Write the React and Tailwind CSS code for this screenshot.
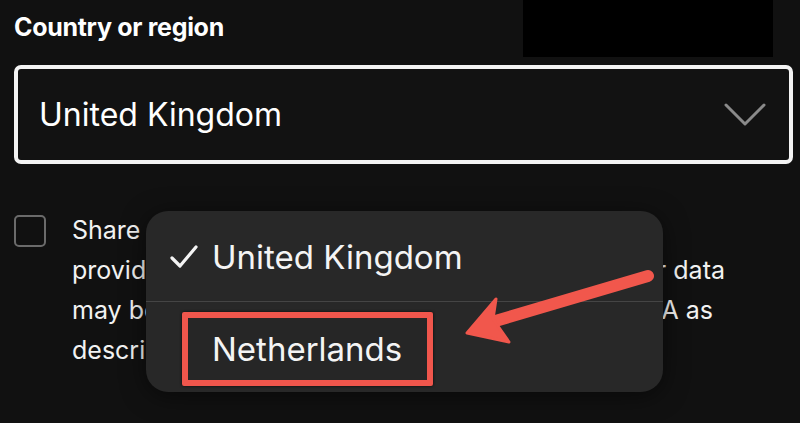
import React from 'react';

const font = { fontFamily: 'Inter, "Open Sans", Arial, sans-serif' };

const lines = [
  { left: "Share my registration data with Spotify's content", right: '', w: 'w-[653px]' },
  { left: 'providers for marketing purposes. Note that', right: 'your data', w: 'w-[653px]' },
  { left: 'may be transferred to a country outside the', right: 'EEA as', w: 'w-[641px]' },
  { left: 'described in our privacy policy.', right: '', w: 'w-[641px]' },
];

function Chevron() {
  return (
    <svg width="42" height="26" viewBox="0 0 42 26" fill="none">
      <path d="M2 3 L21 22 L40 3" stroke="#8a8a8a" strokeWidth="3" strokeLinecap="round" strokeLinejoin="round" />
    </svg>
  );
}

function Arrow() {
  return (
    <svg className="absolute left-0 top-0 pointer-events-none" width="800" height="423" viewBox="0 0 800 423">
      <path d="M648 276 L492 322" stroke="#f1574c" strokeWidth="12" strokeLinecap="round" />
      <path d="M467 333 L496 299 L493 319 L509 342 Z" fill="#f1574c" stroke="#f1574c" strokeWidth="3" strokeLinejoin="round" />
    </svg>
  );
}

export default function App() {
  return (
    <div className="relative w-[800px] h-[423px] overflow-hidden bg-[#111111] text-white" style={font}>
      <div className="flex items-start h-[65px]">
        <h1 className="pl-[14px] pt-[11px] text-[25px] font-bold leading-[32px] tracking-[-0.3px]">Country or region</h1>
        <div className="ml-auto mr-[27px] h-[57px] w-[250px] bg-black" />
      </div>

      <div className="ml-[14px] w-[779px] flex h-[99px] items-center justify-between rounded-[7px] border-[4px] border-[#f4f4f4] bg-[#121212] pl-[21px] pr-[23px]">
        <span className="text-[32px] leading-none">United Kingdom</span>
        <Chevron />
      </div>

      <div className="mt-[50px] flex gap-[26px] pl-[14px]">
        <div className="mt-[1px] h-[32px] w-[32px] shrink-0 rounded-[5px] border-2 border-[#6b6b6b]" />
        <div className="-mt-[4px] text-[25px] leading-[40px] text-[#f2f2f2]">
          {lines.map((l) => (
            <div key={l.left} className={`flex justify-between whitespace-nowrap ${l.w}`}>
              <span>{l.left}</span>
              <span>{l.right}</span>
            </div>
          ))}
        </div>
      </div>

      <div className="absolute left-[146px] top-[211px] w-[517px] h-[181px] overflow-hidden rounded-[22px] bg-[#282828] shadow-[0_4px_24px_rgba(0,0,0,0.5)]">
        <div className="flex h-[90px] items-center gap-[14px] pl-[24px] pt-[2px]">
          <svg width="28" height="24" viewBox="0 0 28 24" fill="none">
            <path d="M2 13 L10 21 L26 2" stroke="#f4f4f4" strokeWidth="3.2" strokeLinecap="round" strokeLinejoin="round" />
          </svg>
          <span className="text-[33px] leading-none text-[#f4f4f4]">United Kingdom</span>
        </div>
        <div className="h-px bg-[#454545]" />
        <div className="pl-[36px] pt-[10px]">
          <div className="flex h-[74px] w-[251px] items-center rounded-[2px] border-[6px] border-[#f0564c] bg-[#262626] pl-[24px] shadow-[0_0_3px_rgba(0,0,0,0.8)]">
            <span className="text-[33px] leading-none text-[#f4f4f4]">Netherlands</span>
          </div>
        </div>
      </div>

      <Arrow />
    </div>
  );
}
